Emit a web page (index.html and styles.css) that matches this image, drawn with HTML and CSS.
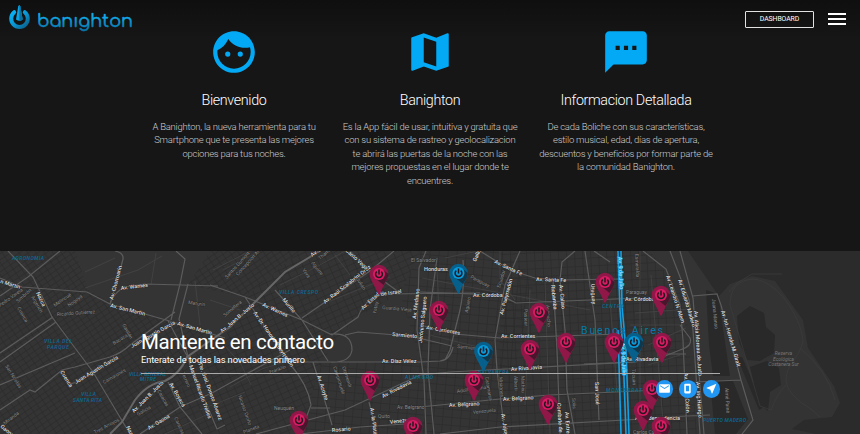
FILE: index.html
```html
<!DOCTYPE html>
<html lang="es">
<head>
<meta charset="utf-8">
<title>Banighton</title>
<link rel="stylesheet" href="styles.css">
</head>
<body>
<header class="bar">
  <svg class="logo" width="136" height="38" viewBox="0 0 136 38">
    <defs>
      <linearGradient id="ring" x1="0" y1="0" x2="1" y2="1"><stop offset="0" stop-color="#08b4f8"/><stop offset=".5" stop-color="#0a95d2"/><stop offset="1" stop-color="#0b5e88"/></linearGradient>
      <linearGradient id="word" x1="0" y1="0" x2="0" y2="1"><stop offset="0.2" stop-color="#12b4f5"/><stop offset="1" stop-color="#0874a8"/></linearGradient>
    </defs>
    <path d="M14.2 12.2A8.3 8.3 0 1 0 24.8 12.2" fill="none" stroke="url(#ring)" stroke-width="4" stroke-linecap="round"/>
    <path d="M18.2 6.5Q19.3 3.5 20.4 6.5L22.7 19.5Q19.5 22 16 19.5Z" fill="#0aa4e6"/>
    <path d="M19.4 5Q20.1 5 20.4 6.5L22.7 19.5Q21 21 19.4 20.9Z" fill="#0d6e9c"/>
    <text class="word" x="37" y="26.6" textLength="96" lengthAdjust="spacingAndGlyphs">banıghton</text>
  </svg>
  <div class="tools">
    <a class="dash">DASHBOARD</a>
    <div class="burger"><i></i><i></i><i></i></div>
  </div>
</header>
<main>
<section class="features">
  <article class="feature">
    <svg class="icon" viewBox="0 0 24 24"><path d="M9 11.75a1.25 1.25 0 1 0 0 2.5 1.25 1.25 0 0 0 0-2.5zm6 0a1.25 1.25 0 1 0 0 2.5 1.25 1.25 0 0 0 0-2.5zM12 2C6.48 2 2 6.48 2 12s4.48 10 10 10 10-4.48 10-10S17.52 2 12 2zm0 18c-4.41 0-8-3.59-8-8 0-.29.02-.58.05-.86 2.36-1.05 4.23-2.98 5.21-5.37C11.07 8.33 14.05 10 17.42 10c.78 0 1.53-.09 2.25-.26.21.71.33 1.47.33 2.26 0 4.41-3.59 8-8 8z"/></svg>
    <h3>Bienvenido</h3>
    <p>A Banighton, la nueva herramienta para tu<br>Smartphone que te presenta las mejores<br>opciones para tus noches.</p>
  </article>
  <article class="feature">
    <svg class="icon" viewBox="0 0 24 24"><path d="M20.5 3l-.16.03L15 5.1 9 3 3.36 4.9c-.21.07-.36.25-.36.48V20.500c0 .28.22.5.5.5l.16-.03L9 18.900l6 2.100 5.640-1.900c.21-.07.36-.25.36-.48V3.500c0-.28-.22-.5-.5-.5zM15 19l-6-2.110V5l6 2.110V19z"/></svg>
    <h3>Banighton</h3>
    <p>Es la App fácil de usar, intuitiva y gratuita que<br>con su sistema de rastreo y geolocalizacion<br>te abrirá las puertas de la noche con las<br>mejores propuestas en el lugar donde te<br>encuentres.</p>
  </article>
  <article class="feature">
    <svg class="icon" viewBox="0 0 24 24"><path d="M20 2H4c-1.100 0-1.990.9-1.990 2L2 22l4-4h14c1.100 0 2-.9 2-2V4c0-1.100-.9-2-2-2zM9 11H7V9h2v2zm4 0h-2V9h2v2zm4 0h-2V9h2v2z"/></svg>
    <h3>Informacion Detallada</h3>
    <p>De cada Boliche con sus características,<br>estilo musical, edad, días de apertura,<br>descuentos y beneficios por formar parte de<br>la comunidad Banighton.</p>
  </article>
</section>
<section class="contact">
  <svg class="map" width="860" height="183" viewBox="0 251 860 183">
    <defs>
      <pattern id="gw" width="7" height="5" patternUnits="userSpaceOnUse" patternTransform="rotate(-34)"><path d="M0 .5H7M.5 0V5"/></pattern>
      <pattern id="gm" width="8" height="6" patternUnits="userSpaceOnUse" patternTransform="rotate(-24)"><path d="M0 .5H8M.5 0V6"/></pattern>
      <pattern id="gc" width="9" height="8" patternUnits="userSpaceOnUse" patternTransform="rotate(5)"><path d="M0 .5H9M.5 0V8"/></pattern>
      <pattern id="ge" width="8" height="8" patternUnits="userSpaceOnUse" patternTransform="rotate(-3)"><path d="M0 .5H8M.5 0V8"/></pattern>
      <g id="pin"><path class="body" d="M-9.300 0A9.300 9.300 0 0 1 9.300 0C9.300 6 4 11 .7 20.500H-.7C-4 11-9.300 6-9.300 0Z"/><path class="shade" d="M4.500-4L9.300 0C9.300 4 6.500 8 4.500 11L-3.500 4.500Z"/><circle class="disc" r="6"/><path class="power" d="M-2.200-2.400A3.400 3.400 0 1 0 2.200-2.400M0-4.600V.4"/></g>
    </defs>
    <path fill="#343434" d="M0 251H860V434H0Z"/>
    <path fill="url(#gw)" d="M0 251H75L88 290L112 303L175 322L225 338L190 372L160 434H0Z"/>
    <path fill="url(#gw)" d="M188 285L245 297L300 251H210Z"/>
    <path fill="url(#gm)" d="M190 372L225 338L245 297L300 251H420L400 293L358 317L340 335L322 362L300 434H160Z"/>
    <path fill="url(#gc)" d="M400 293L420 251H500L535 278L500 434H300L322 362H420Z"/>
    <path fill="url(#ge)" d="M500 251H650L685 300L697 434H500Z"/>
    <path fill="#2b2b2b" d="M688 251H860V434H742L754 420L721 305L716 292Z"/>
    <path fill="#292929" d="M706 290L718 294L730 376H713L709 345Z M710 381H733L748 419L736 434H715Z"/>
    <path fill="#333" d="M719 296L730 284L752 276L775 281L803 320L808 348L834 386L840 403L832 417L804 420L792 429L816 434H742L754 420L742 380Z"/>
    <path fill="#292929" d="M737 316L750 306L764 313L766 327L775 335L774 353L760 361L747 360L739 342Z M750 367L767 361L779 368L781 385L770 392L768 411L759 404Z M737 357L742 357L764 407L759 410Z"/>
    <path class="trail" d="M730 305Q730 280 754 279C783 283 803 325 803 342C798 360 786 365 786 380Q786 394 812 410L820 417M800 348Q827 370 835 400M729 292L737 283L752 274H782M730 305L760 406L771 410Q777 394 786 385"/>
    <g class="small">
      <path d="M85 272L115 258M85 288L138 270L162 256M151 285L156 253M195 281L200 325M213 270L250 251M223 270L260 251M210 300L240 310M225 346L241 364L251 385M230 387L262 369L290 360M200 410L245 392M165 434L210 413M280 285L320 265L345 251M325 303L390 277M335 255L350 275M430 335L490 350M445 258L478 251M437 268L440 335M422 278L590 310M500 251V280L515 300M530 290L525 405M545 282L550 434M610 300L617 390M640 251V434M651 275L664 434M630 325H685M635 313L690 309M690 320H700M648 345L686 328M648 365L680 355"/>
    </g>
    <g class="road">
      <path d="M0 278L22 287L87 292L110 304L173 322L225 338M8 251L33 277L52 317L75 348L93 372L130 434M60 251L28 277L0 296M115 251Q124 253 123 259L118 278L110 304Q116 288 130 286L145 284L218 286M176 251L185 259L180 284L171 320M188 284L179 319L190 365L217 429L225 425M0 353L53 317M0 362L56 322M0 385L75 353M0 410L30 390L35 392L62 370L75 367L110 357Q122 353 130 345L175 312M62 370L70 384L77 382L117 358M140 434L180 407L212 393L250 372L290 350M168 382L180 407L202 434M168 321L186 354L192 362"/>
      <path d="M210 285L245 297L302 320L332 335M245 297L265 327L290 364Q308 385 311 405L300 434M275 290L302 320L328 361M302 318L370 271L394 251M332 335L358 317Q365 298 383 294L480 293M350 251L370 271L400 293M330 334Q352 332 352 350Q350 363 330 362M345 335L358 332L410 336L452 346M225 362H420L440 361Q450 360 453 347M313 362L327 408L332 425M256 434L345 410L420 375L450 372L635 362M300 434L360 427L420 423M369 402L377 434M311 408H330"/>
      <path d="M426 251L419 268L417 330L424 380L426 434M437 258L430 310L428 370L434 434M463 260Q465 286 460 310L450 350L445 360M480 251Q501 264 510 270L535 278L560 280L621 279M520 251L505 285L495 340L497 370L505 434M420 292L500 295L516 303L640 298M575 251L562 262L560 280L565 330L567 390L575 434M553 280L557 350L560 434M420 325L455 334L500 338L620 334M420 407L500 399L550 395L660 390M440 434L500 427L660 418M585 251L595 320L599 420M594 251L610 262M584 364L635 362L660 358L680 350Q693 346 690 338L680 325"/>
      <path d="M643 251L666 269L680 305L683 340L687 434M670 251L689 300L693 330L700 434M680 251L693 298L697 350L704 434M692 296L717 294L721 305L741 380L753 420L742 434M695 382L741 380M665 417L710 415M686 354H664"/>
      <path class="wide" d="M110 434L122 422L135 400Q148 383 165 381Q180 374 187 357L230 327L285 272L320 251"/>
    </g>
    <path class="blue" d="M618 251L620 310L623 350L626 434M621 251L622 306L626 350L629 434M618 330L621 434"/>
    <g class="st">
      <text transform="translate(0 283) rotate(17)">n Martin</text><text transform="translate(36 293) rotate(65)">Nazca</text><text transform="translate(113 300) rotate(-75)">Av. Chorroarín</text><text transform="translate(121 290) rotate(-7)">Av. Warnes</text><text transform="translate(110 307) rotate(14)">Av. San Martin</text><text transform="translate(177 325) rotate(16)">Av. San Martin</text><text transform="translate(132 348) rotate(-29)">Juan Agustín García</text><text transform="translate(76 384) rotate(-31)">Juan Agustín García</text><text transform="translate(60 372) rotate(58)">Cuenca</text><text transform="translate(134 413) rotate(-45)">Av. Juan B. Justo</text><text transform="translate(149 430) rotate(-31)">Av. Gaona</text><text transform="translate(169 384) rotate(60)">Av. Boyacá</text><text transform="translate(189 366) rotate(70)">Manuel Ricardo Trelles</text><text transform="translate(198 363) rotate(70)">Tte. Gral. Donato Álvarez</text><text transform="translate(126 427) rotate(65)">Nazca</text><text transform="translate(0 427) rotate(40)">Gaona</text>
      <text transform="translate(222 333) rotate(-40)">Av. Juan B. Justo</text><text transform="translate(312 257) rotate(-35)">Av. Juan</text><text transform="translate(262 306) rotate(24)">Av. Warnes</text><text transform="translate(282 300) rotate(50)">Murillo</text><text transform="translate(253 313) rotate(55)">Av. Dr. Honorio Pueyrredón</text><text transform="translate(325 304) rotate(-38)">Av. Raúl Scalabrini Ortiz</text><text transform="translate(363 310) rotate(-42)">Av. Estado</text><text transform="translate(381 296) rotate(-8)">de Israel</text><text transform="translate(345 251) rotate(42)">Canto Vega</text><text transform="translate(392 336) rotate(5)">Sarmiento</text><text x="382" y="363">Av. Díaz Vélez</text><text transform="translate(383 398) rotate(-27)">Av. Rivadavia</text><text transform="translate(317 376) rotate(72)">Av. Acoyte</text><text transform="translate(332 432) rotate(-5)">Rosario</text><text transform="translate(370 408) rotate(82)">Av. la Plata</text><text transform="translate(390 424) rotate(-7)">Venezuela</text><text transform="translate(416 319) rotate(-83)">Av. Medrano</text><text transform="translate(422 343) rotate(-84)">Jerónimo Salguero</text>
      <text x="424" y="271">Honduras</text><text x="473" y="297">Av. Córdoba</text><text transform="translate(494 263) rotate(25)">Av. Santa Fe</text><text transform="translate(536 281) rotate(2)">Av. Santa Fe</text><text transform="translate(503 315) rotate(-75)">Av. Pueyrredón</text><text transform="translate(426 329) rotate(10)">Av. Corrientes</text><text x="501" y="338">Av. Corrientes</text><text transform="translate(511 371) rotate(-4)">Av Rivadavia</text><text transform="translate(449 407) rotate(-3)">Av. Belgrano</text><text transform="translate(503 401) rotate(-3)">Av. Belgrano</text><text transform="translate(551 285) rotate(84)">Riobamba</text><text transform="translate(559 285) rotate(84)">Av. Callao</text><text transform="translate(591 284) rotate(87)">Uruguay</text><text transform="translate(595 382) rotate(88)">San José</text><text transform="translate(557 403) rotate(86)">Combate de los</text><text transform="translate(565 412) rotate(86)">Av. Entre Ríos</text><text transform="translate(501 414) rotate(80)">Av. Jujuy</text><text transform="translate(476 262) rotate(-67)">Gallo</text>
      <text x="625" y="301">Av. Córdoba</text><text x="626" y="361">Av. Rivadavia</text><text transform="translate(666 276) rotate(72)">Av. Leandro N. Alem</text><text transform="translate(678 280) rotate(73)">Av. Eduardo Madero</text><text transform="translate(694 311) rotate(86)">Av. Alicia Moreau de Justo</text><text transform="translate(721 311) rotate(74)">Av. Int. Hernán M. Giralt</text><text transform="translate(696 382) rotate(86)">Av. Ing Huergo</text><text transform="translate(684 373) rotate(87)">Av. Paseo Colón</text><text x="635" y="420">Av. Independencia</text>
    </g>
    <g class="st dim">
      <text transform="translate(0 307) rotate(-35)">Pedro Varela</text><text transform="translate(18 303) rotate(-42)">Simbrón</text><text transform="translate(31 297) rotate(60)">Argerich</text><text transform="translate(17 308) rotate(60)">Cuenca</text><text transform="translate(55 307) rotate(-35)">Melincué</text><text transform="translate(69 307) rotate(-35)">Nogoyá</text><text transform="translate(57 316) rotate(-4)">Ricardo Gutiérrez</text><text transform="translate(5 366) rotate(58)">San Nicolás</text><text transform="translate(104 384) rotate(-30)">Camarones</text><text transform="translate(114 345) rotate(-32)">Bacacay</text><text transform="translate(122 325) rotate(60)">Gavilán</text><text x="188" y="304" transform="rotate(8 188 304)">Maturín</text><text transform="translate(95 434) rotate(-28)">Tres Arroyos</text><text transform="translate(5 425) rotate(-38)">Miranda</text><text transform="translate(138 416) rotate(-30)">Galicia</text><text transform="translate(157 391) rotate(60)">Caracas</text><text transform="translate(174 418) rotate(65)">Caracas</text><text transform="translate(181 373) rotate(65)">Terrero</text>
      <text transform="translate(227 279) rotate(-48)">Santos Dumont</text><text transform="translate(238 276) rotate(-48)">Concepción Arenal</text><text transform="translate(225 317) rotate(-40)">Somellera</text><text transform="translate(270 374) rotate(-20)">Franklin</text><text transform="translate(238 396) rotate(70)">Nicasio Oroño</text><text x="274" y="410">Neuquén</text><text transform="translate(244 434) rotate(-22)">Planeta</text><text transform="translate(302 270) rotate(55)">Vera</text><text transform="translate(311 263) rotate(52)">Aguirre</text><text transform="translate(320 260) rotate(-40)">Thames</text><text x="382" y="309" transform="rotate(5 382 309)">Guardia Vieja</text><text transform="translate(333 367) rotate(72)">Campichuelo</text><text transform="translate(342 367) rotate(72)">Otamendi</text><text x="397" y="409">Av. Belgrano</text><text x="411" y="262">El Salvador</text><text x="378" y="418">Quito</text><text transform="translate(356 279) rotate(58)">Julián</text><text transform="translate(376 314) rotate(-80)">Yatay</text>
      <text transform="translate(470 278) rotate(27)">Paraguay</text><text transform="translate(468 313) rotate(-80)">Agüero</text><text transform="translate(500 288) rotate(-72)">Ecuador</text><text x="457" y="348" transform="rotate(6 457 348)">Sarmiento</text><text transform="translate(524 309) rotate(88)">Pasteur</text><text transform="translate(546 305) rotate(86)">Ayacucho</text><text transform="translate(485 377) rotate(80)">Catamarca</text><text transform="translate(499 377) rotate(86)">Misiones</text><text transform="translate(514 376) rotate(88)">Alberti</text><text transform="translate(521 376) rotate(88)">Matheu</text><text transform="translate(572 398) rotate(86)">Solís</text><text transform="translate(457 393) rotate(-8)">Adolfo Alsina</text><text transform="translate(473 414) rotate(-6)">Venezuela</text><text x="626" y="294">Paraguay</text><text transform="translate(632 369) rotate(88)">Tacuarí</text><text transform="translate(635 254) rotate(87)">Esmeralda</text><text transform="translate(712 299) rotate(85)">Juana Manso</text><text transform="translate(725 388) rotate(87)">Aimé Painé</text><text x="633" y="434">Carlos Calvo</text>
    </g>
    <g class="reserve"><text x="783.500" y="355">Reserva</text><text x="783.500" y="360.500">Ecológica</text><text x="783.500" y="366">Costanera Sur</text></g>
    <g class="area"><text x="12" y="260" textLength="32">AGRONOMIA</text><text x="44" y="343" textLength="28">VILLA DEL</text><text x="47" y="348.500" textLength="22">PARQUE</text><text x="129" y="375.500" textLength="37">VILLA GENERAL</text><text x="140" y="381" textLength="16">MITRE</text><text x="81" y="396" textLength="15">VILLA</text><text x="73" y="401.500" textLength="29">SANTA RITA</text><text x="279" y="294" textLength="39">VILLA CRESPO</text><text x="405" y="379" textLength="28">ALMAGRO</text><text x="478" y="374" textLength="31">BALVANERA</text><text x="602" y="308" textLength="22">CENTRO</text><text x="606" y="392" textLength="36">MONSERRAT</text><text x="703" y="422" textLength="43">PUERTO MADERO</text></g>
    <text class="city" x="581" y="333.500" textLength="82">Buenos Aires</text>
    <g class="nueve"><text transform="translate(618 257) rotate(87)">Av. 9 de Julio</text><text transform="translate(621 343) rotate(87)">Av. 9 de Julio</text></g>
    <g class="pink"><use href="#pin" x="379" y="274"/><use href="#pin" x="370" y="380"/><use href="#pin" x="299" y="420"/><use href="#pin" x="413" y="426"/><use href="#pin" x="439" y="310"/><use href="#pin" x="539" y="312"/><use href="#pin" x="530" y="349"/><use href="#pin" x="566" y="342"/><use href="#pin" x="614" y="342"/><use href="#pin" x="474" y="380"/><use href="#pin" x="548" y="404"/><use href="#pin" x="605" y="282"/><use href="#pin" x="661" y="295"/><use href="#pin" x="662" y="342"/><use href="#pin" x="652" y="389"/><use href="#pin" x="643" y="410"/><use href="#pin" x="661" y="426"/></g>
    <g class="cyan"><use href="#pin" x="458.500" y="273"/><use href="#pin" x="483.500" y="351"/><use href="#pin" x="634" y="342"/></g>
  </svg>
  <div class="panel">
    <h2>Mantente en contacto</h2>
    <p>Enterate de todas las novedades primero</p>
    <div class="links">
      <a><svg viewBox="0 0 24 24"><path d="M20 4H4c-1.100 0-2 .9-2 2v12c0 1.100.9 2 2 2h16c1.100 0 2-.9 2-2V6c0-1.100-.9-2-2-2zm0 4l-8 5-8-5V6l8 5 8-5v2z"/></svg></a>
      <a><svg viewBox="0 0 24 24"><path fill-rule="evenodd" d="M8 3H16Q18 3 18 5V19Q18 21 16 21H8Q6 21 6 19V5Q6 3 8 3ZM9 7V17H15V7Z"/></svg></a>
      <a><svg viewBox="0 0 24 24"><path d="M21 3L3 10.530v.98l6.840 2.650L12.480 21h.98L21 3z"/></svg></a>
    </div>
  </div>
</section>
</main>
</body>
</html>
```
FILE: styles.css
```css
* { box-sizing: border-box; }
body {
  margin: 0;
  width: 860px;
  height: 434px;
  overflow: hidden;
  background: #161616;
  color: #fff;
  font-family: Roboto, "Liberation Sans", sans-serif;
}
.bar {
  position: absolute;
  inset: 0 0 auto;
  height: 38px;
  display: flex;
  justify-content: space-between;
}
.logo { overflow: visible; }
.word { font: 400 18px Comfortaa, "DejaVu Sans", sans-serif; fill: url(#word); stroke: url(#word); stroke-width: .5px; }
.tools { display: flex; align-items: center; gap: 14px; padding-right: 14px; }
.dash {
  width: 69px;
  height: 17px;
  border: 1px solid #e2e2e2;
  border-radius: 1px;
  font-size: 6.9px;
  line-height: 15px;
  letter-spacing: -.1px;
  text-align: center;
}
.burger { display: grid; gap: 3px; width: 18px; }
.burger i { height: 2px; background: #fff; }
.features {
  height: 251px;
  padding: 27px 136px 0;
  display: grid;
  grid-template-columns: repeat(3, 196px);
  background: linear-gradient(#0f0f0f, #161616 40px);
}
.feature { text-align: center; }
.icon { display: block; width: 50px; height: 50px; margin: 0 auto; fill: #03a9f4; }
.feature h3 { margin: 13px 0 0; font-size: 14.3px; line-height: 20px; font-weight: 300; letter-spacing: -.35px; color: #fff; }
.feature p { margin: 9.5px 0 0; font-size: 9.5px; line-height: 13.6px; font-weight: 300; letter-spacing: -.24px; color: #ccc; white-space: nowrap; }
.contact { position: relative; height: 183px; }
.map { position: absolute; inset: 0; }
.map pattern path { stroke: #2b2b2b; stroke-width: .7; fill: none; }
.small { fill: none; stroke: #454545; stroke-width: .8; }
.trail { fill: none; stroke: #3c3c3c; stroke-width: .7; }
.road { fill: none; stroke: #5c5c5c; stroke-width: 1.2; }
.wide { stroke-width: 2; stroke: #666; }
.blue { fill: none; stroke: #149fe0; stroke-width: 1.6; }
.st { font-size: 5.5px; font-weight: 500; fill: #ddd; paint-order: stroke; stroke: #2b2b2b; stroke-width: 1px; }
.dim { fill: #888; font-size: 5px; font-weight: 400; }
.reserve { font-size: 5px; font-style: italic; fill: #777; text-anchor: middle; }
.area { font-size: 5px; font-weight: 500; font-style: italic; fill: #086c98; }
.city { font-size: 10.5px; fill: #0878ab; }
.nueve { font-size: 5.5px; fill: #b5e9ff; stroke: #149fe0; stroke-width: 1.5px; paint-order: stroke; }
.pink { --body: #8f1848; --shade: #48172d; --disc: #d91b63; }
.cyan { --body: #07608c; --shade: #12364a; --disc: #079ada; }
.body { fill: var(--body); }
.shade { fill: var(--shade); }
.disc { fill: var(--disc); }
.power { fill: none; stroke: #251720; stroke-width: 1.5; }
.panel { position: relative; margin-left: 141px; width: 579px; padding-top: 79px; }
.panel h2 { margin: 0; font-size: 20.5px; line-height: 24px; font-weight: 400; letter-spacing: -.35px; }
.panel p { margin: 0; padding-bottom: 8px; height: 20px; border-bottom: 1px solid #aaa; font-size: 9.3px; line-height: 11px; letter-spacing: -.12px; }
.links { display: flex; justify-content: flex-end; gap: 6px; margin-top: 6px; }
.links a { width: 17.500px; height: 17.500px; border-radius: 50%; background: #2196f3; display: grid; place-items: center; }
.links svg { width: 13px; height: 13px; fill: #fff; }
```
